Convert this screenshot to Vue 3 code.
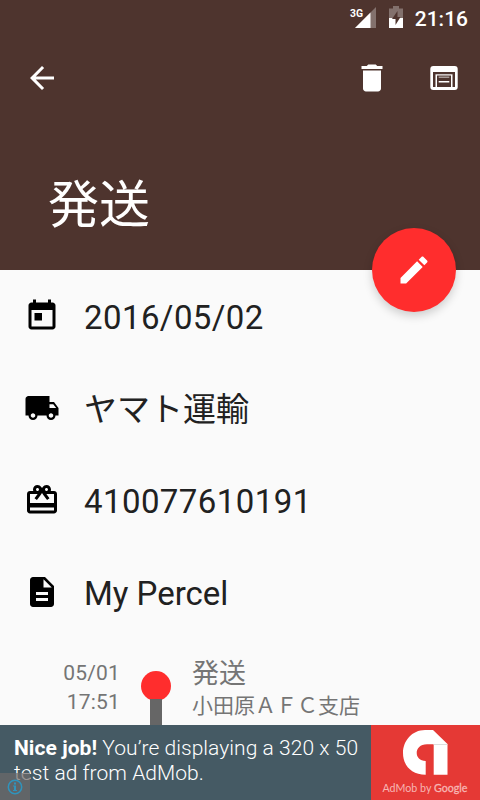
<script setup>
const details = [
  {
    text: '2016/05/02',
    numeric: true,
    icon: 'M19 3h-1V1h-2v2H8V1H6v2H5c-1.11 0-2 .9-2 2v14c0 1.1.89 2 2 2h14c1.1 0 2-.9 2-2V5c0-1.1-.9-2-2-2zm0 16H5V8h14v11zM7 10h5v5H7z',
  },
  {
    text: 'ヤマト運輸',
    icon: 'M20 8h-3V4H3c-1.1 0-2 .9-2 2v11h2c0 1.66 1.34 3 3 3s3-1.34 3-3h6c0 1.66 1.34 3 3 3s3-1.34 3-3h2v-5l-3-4zM6 18.5c-.83 0-1.5-.67-1.5-1.5s.67-1.5 1.5-1.5 1.5.67 1.5 1.5-.67 1.5-1.5 1.5zm13.5-9l1.96 2.5H17V9.5h2.5zm-1.5 9c-.83 0-1.5-.67-1.5-1.5s.67-1.5 1.5-1.5 1.5.67 1.5 1.5-.67 1.5-1.5 1.5z',
  },
  {
    text: '410077610191',
    numeric: true,
    icon: 'M20 6h-2.18c.11-.31.18-.65.18-1 0-1.66-1.34-3-3-3-1.05 0-1.96.54-2.5 1.35l-.5.67-.5-.68C10.96 2.54 10.05 2 9 2 7.34 2 6 3.34 6 5c0 .35.07.69.18 1H4c-1.11 0-1.99.89-1.99 2L2 19c0 1.11.89 2 2 2h16c1.11 0 2-.89 2-2V8c0-1.11-.89-2-2-2zm-5-2c.55 0 1 .45 1 1s-.45 1-1 1-1-.45-1-1 .45-1 1-1zM9 4c.55 0 1 .45 1 1s-.45 1-1 1-1-.45-1-1 .45-1 1-1zm11 15H4v-2h16v2zm0-5H4V8h5.08L7 10.83 8.62 12 11 8.76l1-1.36 1 1.36L15.38 12 17 10.83 14.92 8H20v6z',
  },
  {
    text: 'My Percel',
    icon: 'M14 2H6c-1.1 0-1.99.9-1.99 2L4 20c0 1.1.89 2 1.99 2H18c1.1 0 2-.9 2-2V8l-6-6zm2 16H8v-2h8v2zm0-4H8v-2h8v2zm-3-5V3.5L18.5 9H13z',
  },
]
</script>

<template>
  <div class="screen">
    <header class="header">
      <div class="status">
        <svg class="signal" width="28" height="24" viewBox="0 0 28 24">
          <path d="M27 1v21H6z" fill="#fff" fill-opacity=".3" />
          <path d="M21.500 6.500V22H6z" fill="#fff" />
          <text class="net" x="1" y="10.500" textLength="13" lengthAdjust="spacingAndGlyphs">3G</text>
        </svg>
        <svg class="battery" width="14" height="22" viewBox="0 0 14 22">
          <path d="M0 2.500h4V0h6v2.500h4V12H0z" fill="#fff" fill-opacity=".3" />
          <path d="M0 12h14v10H0z" fill="#fff" />
          <path d="M8.500 5L3 13h3.500v6L11.500 11H8.500z" fill="#4e342e" />
        </svg>
        <span class="clock">21:16</span>
      </div>
      <nav class="toolbar">
        <svg class="icon" viewBox="0 0 24 24"><path d="M20 11H7.830l5.590-5.590L12 4l-8 8 8 8 1.410-1.410L7.830 13H20v-2z" /></svg>
        <span class="grow"></span>
        <svg class="icon" viewBox="0 0 24 24"><path d="M6 19c0 1.100.9 2 2 2h8c1.100 0 2-.9 2-2V7H6v12zM19 4h-3.500l-1-1h-5l-1 1H5v2h14V4z" /></svg>
        <svg class="icon" viewBox="0 0 36 36">
          <rect x="4.300" y="6" width="27.400" height="24" rx="3" />
          <path class="cut" d="M7 12h22v15H7z" />
          <path d="M9.500 14.300h17V27h-17z" />
          <path class="cut" d="M11 15.500h14V27H11z" />
          <path d="M13 17h10v4.300H13zM13 22.700h10V27H13z" fill-opacity="0" />
          <path d="M12.700 21h10.600v1.500H12.700zM12.700 16.700h10.600V17.500H12.700z" />
        </svg>
      </nav>
      <h1 class="title">発送</h1>
      <button class="fab">
        <svg class="icon" viewBox="0 0 24 24"><path d="M3 17.250V21h3.750L17.810 9.940l-3.750-3.750L3 17.250zM20.710 7.040c.39-.39.39-1.020 0-1.410l-2.340-2.340c-.39-.39-1.020-.39-1.410 0l-1.830 1.830 3.750 3.750 1.830-1.830z" /></svg>
      </button>
    </header>

    <main class="details">
      <div v-for="item in details" :key="item.text" class="row">
        <svg class="icon" viewBox="0 0 24 24"><path :d="item.icon" /></svg>
        <span class="value" :class="{ numeric: item.numeric }">{{ item.text }}</span>
      </div>
      <section class="event">
        <div class="when"><div>05/01</div><div>17:51</div></div>
        <div class="track"><i class="dot"></i><i class="line"></i></div>
        <div class="what">
          <div class="state">発送</div>
          <div class="place">小田原ＡＦＣ支店</div>
        </div>
      </section>
    </main>

    <footer class="ad">
      <p class="message"><span class="first"><b>Nice job!</b> You’re displaying a 320 x 50</span><span class="second">test ad from AdMob.</span></p>
      <div class="brand">
        <svg width="109" height="75" viewBox="0 0 109 75">
          <path d="M54 5h8L76.500 19V49.700H62.700V19.300H56C42.500 19.300 42.500 36 54.700 36V49.700C40 49.700 32 40 32 28S41 5 54 5z" fill="#fff" />
          <path d="M62.700 19.500h13.500" stroke="#ddd" />
          <text class="brand-name" x="11.500" y="66.700" textLength="85" lengthAdjust="spacingAndGlyphs">AdMob by <tspan class="google">Google</tspan></text>
        </svg>
      </div>
      <span class="info">
        <svg width="16" height="16" viewBox="0 0 16 16">
          <circle cx="8" cy="8" r="6.700" fill="none" stroke="#2f94bd" stroke-width="1.500" />
          <path d="M7 3.500h2v2H7zM6 6.500h3V11h1v1H6v-1h1V7.500H6z" fill="#2f94bd" />
        </svg>
      </span>
    </footer>
  </div>
</template>

<style>
body { margin: 0; }
</style>

<style scoped>
.screen {
  width: 480px;
  height: 800px;
  display: flex;
  flex-direction: column;
  overflow: hidden;
  background: #fafafa;
  font-family: Roboto, "Noto Sans CJK JP", sans-serif;
  color: #212121;
}
.header {
  position: relative;
  height: 270px;
  flex: none;
  background: #4e342e;
  color: #fff;
}
.status {
  height: 36px;
  display: flex;
  align-items: flex-start;
  justify-content: flex-end;
  padding-right: 12px;
}
.signal { margin-top: 6px; }
.battery { margin: 6px 12px 0 12px; }
.net { font: 700 11.5px Roboto, sans-serif; fill: #fff; }
.clock { font-size: 21px; font-weight: 500; line-height: 39px; }
.icon { width: 36px; height: 36px; flex: none; display: block; fill: currentColor; }
.icon .cut { fill: #4e342e; }
.toolbar {
  height: 84px;
  display: flex;
  align-items: center;
  gap: 36px;
  padding: 0 18px 0 24px;
  box-sizing: border-box;
}
.grow { flex: 1; }
.title {
  margin: 56px 0 0 48px;
  font-size: 51px;
  font-weight: 400;
  line-height: 60px;
}
.fab {
  position: absolute;
  right: 24px;
  bottom: -42px;
  width: 84px;
  height: 84px;
  padding: 0;
  border: 0;
  border-radius: 50%;
  display: grid;
  place-items: center;
  background: #ff2d2d;
  color: #fff;
  box-shadow: 0 4px 10px rgba(0, 0, 0, .18);
}
.details { height: 455px; overflow: hidden; }
.row {
  height: 92px;
  display: flex;
  align-items: center;
  gap: 24px;
  padding-left: 24px;
  font-size: 33px;
  line-height: 40px;
  white-space: nowrap;
}
.row .icon { color: #000; }
.value { padding-top: 4px; }
.numeric { letter-spacing: .42px; }
.event { display: flex; height: 90px; color: #757575; }
.when {
  width: 120px;
  padding-top: 21px;
  font-size: 21px;
  line-height: 29px;
  letter-spacing: .2px;
  text-align: right;
}
.track {
  width: 30px;
  margin-left: 21px;
  display: flex;
  flex-direction: column;
  align-items: center;
  padding-top: 33px;
}
.dot { width: 30px; height: 30px; flex: none; border-radius: 50%; background: #ff2d2d; }
.line { width: 12px; height: 40px; margin-top: -2px; background: #666; }
.what { margin-left: 21px; padding-top: 19px; }
.state { font-size: 27px; line-height: 34px; }
.place { font-size: 21px; line-height: 31px; }
.ad {
  position: relative;
  height: 75px;
  flex: none;
  display: flex;
  background: #455a64;
  color: #fff;
}
.message {
  width: 371px;
  box-sizing: border-box;
  margin: 0;
  padding: 11px 0 0 14px;
  font-size: 21px;
  font-weight: 300;
  line-height: 25px;
  letter-spacing: .05px;
  white-space: nowrap;
}
.message span { display: block; }
.message b { font-weight: 700; }
.brand { width: 109px; background: #e53935; }
.brand svg { display: block; }
.brand-name { font: 400 11px Lato, sans-serif; fill: #f7b5b3; }
.google { font-weight: 400; stroke: #f7b5b3; stroke-width: .3px; }
.info {
  position: absolute;
  left: 0;
  bottom: 0;
  width: 30px;
  height: 27px;
  display: grid;
  place-items: center;
  background: rgba(110, 105, 105, .7);
}
</style>
